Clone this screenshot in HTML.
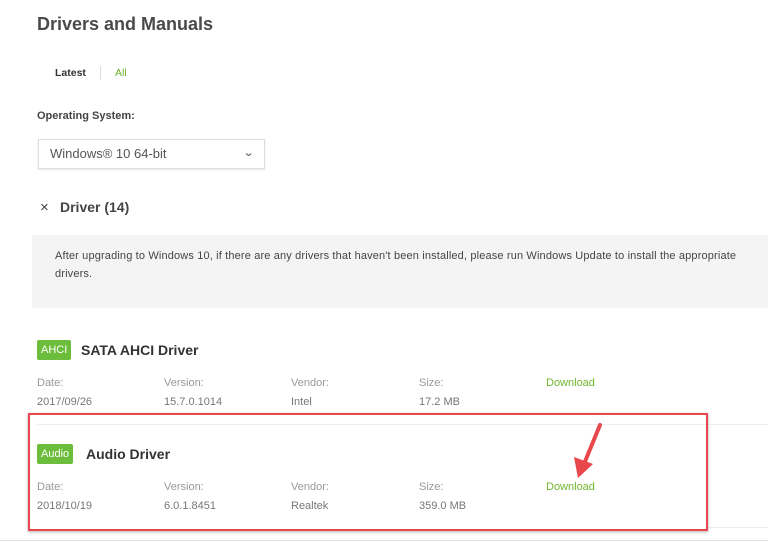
<!DOCTYPE html>
<html><head><meta charset="utf-8"><style>
*{margin:0;padding:0;box-sizing:border-box}
body{width:768px;height:547px;background:#fff;position:relative;overflow:hidden;font-family:"Liberation Sans",sans-serif;color:#333}
.a{position:absolute;white-space:nowrap}
.lbl{color:#999;font-size:11px}
.val{color:#777;font-size:11px}
.g{color:#6fb52c}
.badge{position:absolute;background:#6cbd3c;color:#fff;font-size:11px;height:20px;line-height:20px;padding:0 4px;border-radius:2px}
.t{font-size:14px;font-weight:bold;color:#333}
</style></head><body>
<div class="a" style="left:37px;top:14px;font-size:18px;font-weight:bold;color:#4a4a4a">Drivers and Manuals</div>
<div class="a" style="left:55px;top:67px;font-size:10.5px;font-weight:bold;color:#333">Latest</div>
<div class="a" style="left:100px;top:66px;width:1px;height:14px;background:#ddd"></div>
<div class="a g" style="left:115px;top:67px;font-size:10.5px">All</div>
<div class="a" style="left:37px;top:110px;font-size:11px;font-weight:bold;color:#444">Operating System:</div>
<div class="a" style="left:38px;top:139px;width:227px;height:30px;border:1px solid #ddd;box-shadow:0 1px 2px rgba(0,0,0,.1)"></div>
<div class="a" style="left:50px;top:146px;font-size:13px;color:#555">Windows® 10 64-bit</div>
<div class="a" style="left:244px;top:146px;font-size:11px;color:#555;transform:scaleX(1.3)">&#8964;</div>
<div class="a" style="left:40px;top:199px;font-size:15px;color:#444">×</div>
<div class="a" style="left:60px;top:199px;font-size:14px;font-weight:bold;color:#444">Driver (14)</div>
<div class="a" style="left:32px;top:235px;width:736px;height:73px;background:#f4f4f4"></div>
<div class="a" style="left:55px;top:247px;font-size:11px;letter-spacing:0.15px;line-height:18px;color:#444;white-space:normal;width:700px">After upgrading to Windows 10, if there are any drivers that haven't been installed, please run Windows Update to install the appropriate drivers.</div>

<div class="badge" style="left:37px;top:340px">AHCI</div>
<div class="a t" style="left:81px;top:342px">SATA AHCI Driver</div>
<div class="a lbl" style="left:37px;top:377px">Date:</div>
<div class="a lbl" style="left:164px;top:377px">Version:</div>
<div class="a lbl" style="left:291px;top:377px">Vendor:</div>
<div class="a lbl" style="left:419px;top:377px">Size:</div>
<div class="a g" style="left:546px;top:377px;font-size:11px">Download</div>
<div class="a val" style="left:37px;top:396px">2017/09/26</div>
<div class="a val" style="left:164px;top:396px">15.7.0.1014</div>
<div class="a val" style="left:291px;top:396px">Intel</div>
<div class="a val" style="left:419px;top:396px">17.2 MB</div>

<div class="a" style="left:37px;top:424px;width:731px;height:1px;background:#eee"></div>
<div class="badge" style="left:37px;top:444px">Audio</div>
<div class="a t" style="left:86px;top:446px">Audio Driver</div>
<div class="a lbl" style="left:37px;top:481px">Date:</div>
<div class="a lbl" style="left:164px;top:481px">Version:</div>
<div class="a lbl" style="left:291px;top:481px">Vendor:</div>
<div class="a lbl" style="left:419px;top:481px">Size:</div>
<div class="a g" style="left:546px;top:481px;font-size:11px">Download</div>
<div class="a val" style="left:37px;top:500px">2018/10/19</div>
<div class="a val" style="left:164px;top:500px">6.0.1.8451</div>
<div class="a val" style="left:291px;top:500px">Realtek</div>
<div class="a val" style="left:419px;top:500px">359.0 MB</div>
<div class="a" style="left:707px;top:527px;width:61px;height:1px;background:#eee"></div>
<div class="a" style="left:0;top:540px;width:768px;height:1px;background:#ddd"></div>
<div class="a" style="left:28px;top:413px;width:680px;height:118px;border:2px solid #e8474c;box-shadow:0 1px 3px rgba(0,0,0,.3)"></div>
<svg class="a" style="left:565px;top:420px" width="45" height="62" viewBox="0 0 45 62">
<path d="M35 5 L19 44" stroke="#e8474c" stroke-width="4" stroke-linecap="round"/>
<path d="M9 37 L13 58 L28 44 Z" fill="#e8474c"/>
</svg>
</body></html>
